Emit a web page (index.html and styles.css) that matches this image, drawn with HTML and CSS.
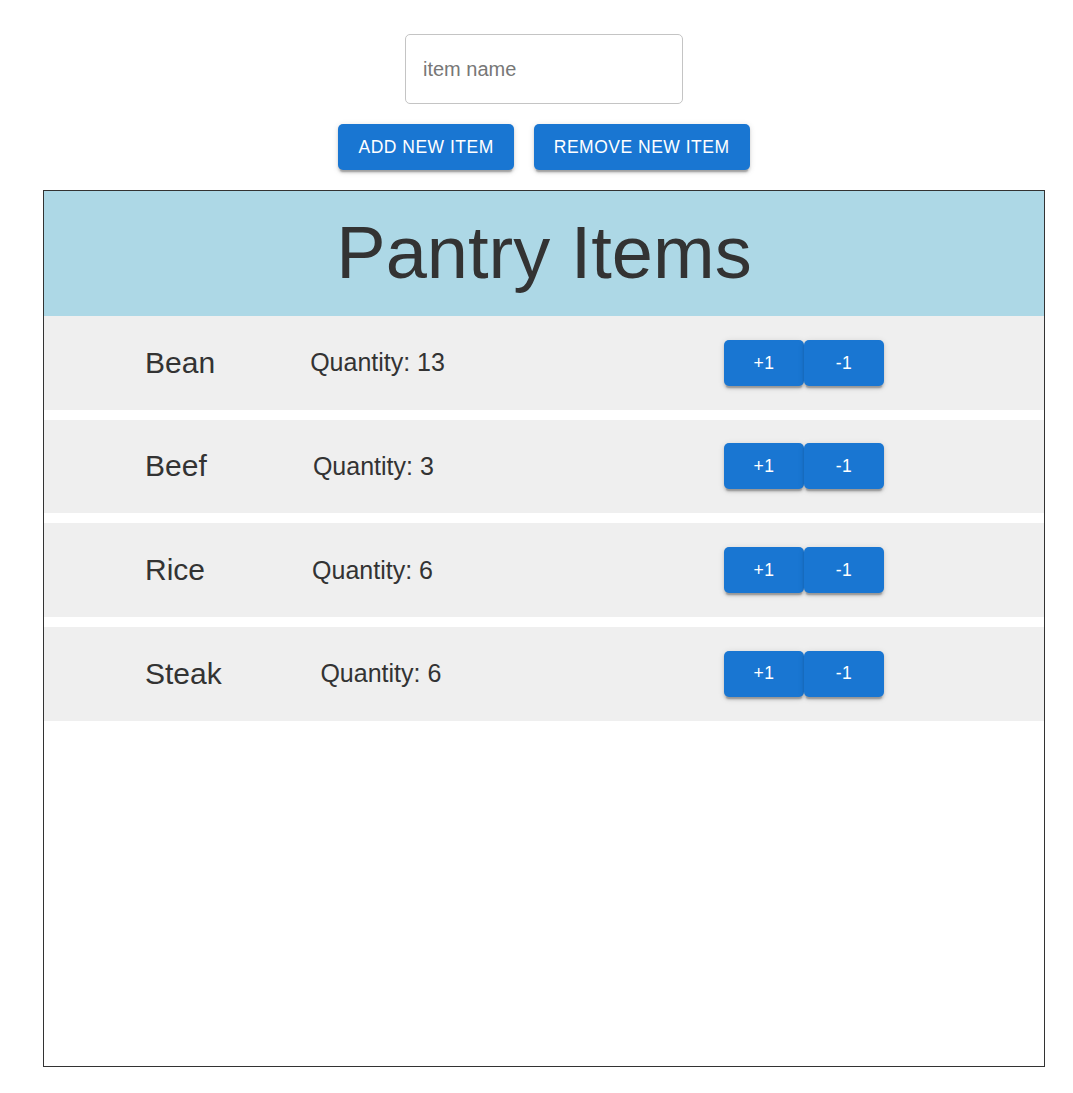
FILE: index.html
```html
<!DOCTYPE html>
<html lang="en">
<head>
<meta charset="utf-8">
<title>Pantry</title>
<link rel="stylesheet" href="styles.css">
</head>
<body>
<div class="page">
  <div class="controls">
    <input class="name-input" type="text" placeholder="item name">
    <div class="control-buttons">
      <button class="btn btn-wide">ADD NEW ITEM</button>
      <button class="btn btn-wide">REMOVE NEW ITEM</button>
    </div>
  </div>
  <div class="pantry">
    <div class="pantry-header">
      <h2 class="pantry-title">Pantry Items</h2>
    </div>
    <div class="list">
      <div class="row">
        <div class="info">
          <span class="name">Bean</span>
          <span class="qty">Quantity: 13</span>
        </div>
        <div class="actions">
          <button class="btn btn-small">+1</button>
          <button class="btn btn-small">-1</button>
        </div>
      </div>
      <div class="row">
        <div class="info">
          <span class="name">Beef</span>
          <span class="qty">Quantity: 3</span>
        </div>
        <div class="actions">
          <button class="btn btn-small">+1</button>
          <button class="btn btn-small">-1</button>
        </div>
      </div>
      <div class="row">
        <div class="info">
          <span class="name">Rice</span>
          <span class="qty">Quantity: 6</span>
        </div>
        <div class="actions">
          <button class="btn btn-small">+1</button>
          <button class="btn btn-small">-1</button>
        </div>
      </div>
      <div class="row">
        <div class="info">
          <span class="name">Steak</span>
          <span class="qty">Quantity: 6</span>
        </div>
        <div class="actions">
          <button class="btn btn-small">+1</button>
          <button class="btn btn-small">-1</button>
        </div>
      </div>
    </div>
  </div>
</div>
</body>
</html>
```
FILE: styles.css
```css
* { box-sizing: border-box; }

html, body {
  margin: 0;
  padding: 0;
  background: #fff;
}

body {
  font-family: "Liberation Sans", Arial, Helvetica, sans-serif;
  color: #333;
}

.page {
  width: 1002px;
  margin-left: 43px;
  padding-top: 34px;
  display: flex;
  flex-direction: column;
  gap: 20px;
}

.controls {
  display: flex;
  flex-direction: column;
  align-items: center;
  gap: 20px;
}

.name-input {
  width: 278px;
  height: 70px;
  border: 1px solid #c4c4c4;
  border-radius: 5px;
  padding: 0 17px;
  font-family: inherit;
  font-size: 20px;
  color: #222;
  outline: none;
  background: #fff;
}

.name-input::placeholder {
  color: #777;
  opacity: 1;
}

.control-buttons {
  display: flex;
  gap: 20px;
}

.btn {
  font-family: "Liberation Sans", Arial, Helvetica, sans-serif;
  font-size: 17.5px;
  letter-spacing: 0.5px;
  line-height: 1.75;
  color: #fff;
  background: #1976d2;
  border: none;
  border-radius: 5px;
  cursor: pointer;
  box-shadow: 0 3.75px 1.25px -2.5px rgba(0,0,0,0.2),
              0 2.5px 2.5px 0 rgba(0,0,0,0.14),
              0 1.25px 6.25px 0 rgba(0,0,0,0.12);
  height: 46px;
}

.btn-wide {
  padding: 0 20px;
}

.btn-small {
  width: 80px;
  padding: 0;
}

.pantry {
  border: 1px solid #333;
  height: 877px;
  display: flex;
  flex-direction: column;
}

.pantry-header {
  height: 125px;
  background: #add8e6;
  display: flex;
  align-items: center;
  justify-content: center;
}

.pantry-title {
  margin: 0;
  font-size: 74px;
  font-weight: 400;
  line-height: 1.2;
  color: #333;
}

.list {
  display: flex;
  flex-direction: column;
  gap: 10px;
}

.row {
  height: 93.67px;
  background: #efefef;
  display: flex;
  align-items: center;
  padding-left: 101px;
}

.info {
  width: 395px;
  display: flex;
  align-items: center;
}

.name {
  font-size: 30px;
  color: #333;
}

.qty {
  flex: 1;
  text-align: center;
  font-size: 25px;
  color: #333;
}

.actions {
  margin-left: 184px;
  display: flex;
}
```
